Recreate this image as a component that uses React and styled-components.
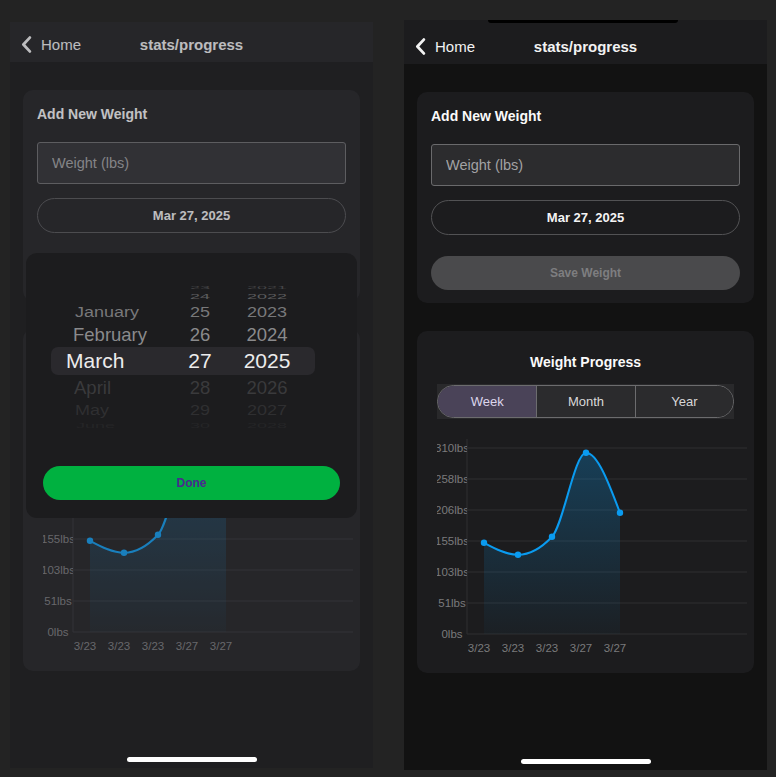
import React from 'react';
import styled, { createGlobalStyle } from 'styled-components';

const GlobalStyle = createGlobalStyle`
  html, body {
    margin: 0;
    padding: 0;
    background: #232323;
  }
  body {
    font-family: "Liberation Sans", Arial, sans-serif;
  }
  * {
    box-sizing: border-box;
  }
`;

const Page = styled.div`
  display: flex;
  align-items: flex-start;
  gap: 31px;
  width: 776px;
  height: 777px;
  padding-left: 10px;
  overflow: hidden;
`;

const Phone = styled.div`
  position: relative;
  display: flex;
  flex-direction: column;
  width: 363px;
  height: ${(p) => p.$height}px;
  margin-top: ${(p) => p.$top}px;
  background: #121212;
  overflow: hidden;
`;

const Notch = styled.div`
  position: absolute;
  top: 0;
  left: 84px;
  width: 190px;
  height: 3px;
  background: #000;
  border-radius: 0 0 4px 4px;
  z-index: 3;
`;

const Header = styled.header`
  display: grid;
  grid-template-columns: 1fr auto 1fr;
  align-items: center;
  height: ${(p) => p.$height}px;
  padding: ${(p) => p.$pad}px 11px 0;
  background: #1c1c1e;
  color: #f2f2f2;
`;

const Back = styled.div`
  display: flex;
  align-items: center;
  gap: 9px;
  font-size: 15px;
  height: 36px;
`;

const Title = styled.div`
  font-size: 15px;
  font-weight: 700;
`;

const Content = styled.main`
  display: flex;
  flex-direction: column;
  gap: 28px;
  padding: 28px 13px 0;
`;

const Card = styled.section`
  display: flex;
  flex-direction: column;
  background: #1c1c1e;
  border-radius: 10px;
  padding: ${(p) => p.$pad};
`;

const CardTitle = styled.h2`
  margin: 0;
  font-size: 14px;
  line-height: 20px;
  font-weight: 700;
  color: #fafafa;
  text-align: ${(p) => (p.$center ? 'center' : 'left')};
`;

const WeightInput = styled.input`
  height: 42px;
  margin-top: 18px;
  padding: 0 14px;
  border: 1px solid #6a6a6c;
  border-radius: 3px;
  background: #2c2c2e;
  color: #fff;
  font: 14.5px "Liberation Sans", Arial, sans-serif;
  outline: none;

  &::placeholder {
    color: #a2a2a4;
  }
`;

const DateButton = styled.button`
  height: 35px;
  margin-top: 14px;
  border: 1px solid #525254;
  border-radius: 18px;
  background: transparent;
  color: #f4f4f4;
  font: 700 13px "Liberation Sans", Arial, sans-serif;
`;

const SaveButton = styled.button`
  height: 34px;
  margin-top: 21px;
  border: none;
  border-radius: 17px;
  background: #4a4a4c;
  color: #7e7e80;
  font: 700 12px "Liberation Sans", Arial, sans-serif;
`;

const SegmentWrap = styled.div`
  align-self: center;
  width: 297px;
  height: 35px;
  margin-top: 12px;
  padding: 1px 0;
  background: #29292b;
`;

const SegmentPill = styled.div`
  display: grid;
  grid-template-columns: repeat(3, 1fr);
  height: 100%;
  border: 1px solid #6c6c6e;
  border-radius: 17px;
  overflow: hidden;
`;

const Segment = styled.div`
  display: flex;
  align-items: center;
  justify-content: center;
  background: ${(p) => (p.$active ? '#4a4358' : '#2b2b2d')};
  color: ${(p) => (p.$active ? '#ddd6ec' : '#d8d8d8')};
  font-size: 13px;
  & + & {
    border-left: 1px solid #6c6c6e;
  }
`;

const ChartBox = styled.svg`
  display: block;
  margin: 17px 0 0 20px;
  font-family: "Liberation Sans", Arial, sans-serif;
`;

const HomeIndicator = styled.div`
  position: relative;
  z-index: 3;
  align-self: center;
  width: 130px;
  height: 5px;
  margin: auto 0 6px;
  border-radius: 3px;
  background: #fff;
`;

const Dim = styled.div`
  position: absolute;
  inset: 0;
  background: rgba(64, 64, 70, 0.3);
  z-index: 1;
`;

const PickerSheet = styled.div`
  position: absolute;
  left: 16px;
  top: 231px;
  z-index: 2;
  display: flex;
  flex-direction: column;
  width: 331px;
  height: 265px;
  padding: 32px 0 18px;
  background: #1c1c1e;
  border-radius: 11px;
`;

const Wheel = styled.div`
  width: 264px;
  margin-left: 25px;
`;

const WheelRow = styled.div`
  display: grid;
  grid-template-columns: 122px 54px 80px;
  align-items: center;
  height: ${(p) => p.$h}px;
  line-height: ${(p) => p.$h}px;
  font-size: ${(p) => p.$size}px;
  color: ${(p) => p.$color};
  background: ${(p) => (p.$selected ? '#2a292d' : 'transparent')};
  border-radius: 7px;
  white-space: nowrap;
  overflow: visible;
`;

const WheelCell = styled.span`
  display: block;
  text-align: ${(p) => (p.$left ? 'left' : 'center')};
  padding-left: ${(p) => p.$indent || 0}px;
  transform: scaleY(${(p) => p.$scale});
`;

const DoneButton = styled.button`
  height: 34px;
  margin: auto 17px 0;
  border: none;
  border-radius: 17px;
  background: #00b140;
  color: #4a2a8e;
  font: 700 12px "Liberation Sans", Arial, sans-serif;
`;

const ChevronLeft = () => (
  <svg width="11" height="17" viewBox="0 0 11 17">
    <path
      d="M8.8 1.6 L2.4 8.5 L8.8 15.4"
      fill="none"
      stroke="#f2f2f2"
      strokeWidth="2.8"
      strokeLinecap="round"
      strokeLinejoin="round"
    />
  </svg>
);

const weights = [152, 132, 162, 302, 202];
const dates = ['3/23', '3/23', '3/23', '3/27', '3/27'];
const yLabels = ['310lbs', '258lbs', '206lbs', '155lbs', '103lbs', '51lbs', '0lbs'];

// monotone cubic curve through the points
function monotonePath(pts) {
  const n = pts.length;
  const s = [];
  for (let i = 0; i < n - 1; i++) {
    s.push((pts[i + 1][1] - pts[i][1]) / (pts[i + 1][0] - pts[i][0]));
  }
  const t = new Array(n).fill(0);
  for (let i = 1; i < n - 1; i++) {
    const h0 = pts[i][0] - pts[i - 1][0];
    const h1 = pts[i + 1][0] - pts[i][0];
    const p = (s[i - 1] * h1 + s[i] * h0) / (h0 + h1);
    const sign = (v) => (v < 0 ? -1 : 1);
    t[i] =
      (sign(s[i - 1]) + sign(s[i])) *
        Math.min(Math.abs(s[i - 1]), Math.abs(s[i]), 0.5 * Math.abs(p)) || 0;
  }
  t[0] = (3 * s[0] - t[1]) / 2;
  t[n - 1] = (3 * s[n - 2] - t[n - 2]) / 2;
  let d = `M${pts[0][0]},${pts[0][1]}`;
  for (let i = 0; i < n - 1; i++) {
    const [x0, y0] = pts[i];
    const [x1, y1] = pts[i + 1];
    const dx = (x1 - x0) / 3;
    d += ` C${x0 + dx},${y0 + dx * t[i]} ${x1 - dx},${y1 - dx * t[i + 1]} ${x1},${y1}`;
  }
  return d;
}

const WeightChart = ({ id }) => {
  const base = 198;
  const pts = weights.map((v, i) => [47 + 34 * i, base - (v * 186) / 310]);
  const line = monotonePath(pts);
  const area = `${line} L${pts[pts.length - 1][0]},${base} L${pts[0][0]},${base} Z`;
  return (
    <ChartBox width="310" height="220" viewBox="0 0 310 220">
      <defs>
        <linearGradient id={`fill-${id}`} x1="0" y1="17" x2="0" y2="198" gradientUnits="userSpaceOnUse">
          <stop offset="0" stopColor="#0a9bf0" stopOpacity="0.27" />
          <stop offset="1" stopColor="#0a9bf0" stopOpacity="0.03" />
        </linearGradient>
        <clipPath id={`lab-${id}`}>
          <rect x="0" y="0" width="30" height="220" />
        </clipPath>
      </defs>
      {yLabels.map((l, i) => (
        <line key={l} x1="30" x2="310" y1={12 + 31 * i} y2={12 + 31 * i} stroke="#2e2e30" strokeWidth="1" />
      ))}
      <line x1="30" x2="30" y1="3" y2="198" stroke="#2e2e30" strokeWidth="1" />
      <g clipPath={`url(#lab-${id})`}>
        {yLabels.map((l, i) => (
          <text key={l} x="15" y={12 + 31 * i} fill="#7a7a7c" fontSize="11.5" textAnchor="middle" dominantBaseline="central">
            {l}
          </text>
        ))}
      </g>
      {dates.map((d, i) => (
        <text key={i} x={42 + 34 * i} y="212" fill="#7a7a7c" fontSize="11.5" textAnchor="middle" dominantBaseline="central">
          {d}
        </text>
      ))}
      <path d={area} fill={`url(#fill-${id})`} />
      <path d={line} fill="none" stroke="#0a9bf0" strokeWidth="2" />
      {pts.map(([x, y], i) => (
        <circle key={i} cx={x} cy={y} r="3.2" fill="#0a9bf0" />
      ))}
    </ChartBox>
  );
};

const wheelRows = [
  { h: 6, size: 18, scale: 0.22, color: '#454547', cells: ['', '23', '2021'], indent: 26 },
  { h: 11, size: 18, scale: 0.45, color: '#5c5c5e', cells: ['December', '24', '2022'], indent: 25, monthColor: 'transparent' },
  { h: 20, size: 18, scale: 0.78, color: '#78787a', cells: ['January', '25', '2023'], indent: 24 },
  { h: 25, size: 18.5, scale: 0.95, color: '#8a8a8c', cells: ['February', '26', '2024'], indent: 22 },
  { h: 28, size: 21, scale: 1, color: '#ececec', cells: ['March', '27', '2025'], indent: 15, selected: true },
  { h: 25, size: 18.5, scale: 0.95, color: '#3a3a3c', cells: ['April', '28', '2026'], indent: 23 },
  { h: 20, size: 18, scale: 0.78, color: '#2f2f31', cells: ['May', '29', '2027'], indent: 24 },
  { h: 11, size: 18, scale: 0.45, color: '#252527', cells: ['June', '30', '2028'], indent: 25 },
];

const DatePicker = () => (
  <PickerSheet>
    <Wheel>
      {wheelRows.map((r, i) => (
        <WheelRow key={i} $h={r.h} $size={r.size} $color={r.color} $selected={r.selected}>
          <WheelCell $left $indent={r.indent} $scale={r.scale} style={r.monthColor ? { color: r.monthColor } : undefined}>
            {r.cells[0]}
          </WheelCell>
          <WheelCell $scale={r.scale}>{r.cells[1]}</WheelCell>
          <WheelCell $scale={r.scale}>{r.cells[2]}</WheelCell>
        </WheelRow>
      ))}
    </Wheel>
    <DoneButton>Done</DoneButton>
  </PickerSheet>
);

const ProgressScreen = ({ id, top, height, headerHeight, headerPad, picker, notch }) => (
  <Phone $top={top} $height={height}>
    {notch && <Notch />}
    <Header $height={headerHeight} $pad={headerPad}>
      <Back>
        <ChevronLeft />
        <span>Home</span>
      </Back>
      <Title>stats/progress</Title>
      <span />
    </Header>
    <Content>
      <Card $pad="14px 14px 13px">
        <CardTitle>Add New Weight</CardTitle>
        <WeightInput placeholder="Weight (lbs)" readOnly />
        <DateButton>Mar 27, 2025</DateButton>
        <SaveButton>Save Weight</SaveButton>
      </Card>
      <Card $pad="21px 0 17px">
        <CardTitle $center>Weight Progress</CardTitle>
        <SegmentWrap>
          <SegmentPill>
            <Segment $active>Week</Segment>
            <Segment>Month</Segment>
            <Segment>Year</Segment>
          </SegmentPill>
        </SegmentWrap>
        <WeightChart id={id} />
      </Card>
    </Content>
    <HomeIndicator />
    {picker && (
      <>
        <Dim />
        <DatePicker />
      </>
    )}
  </Phone>
);

export default function App() {
  return (
    <>
      <GlobalStyle />
      <Page>
        <ProgressScreen id="a" top={22} height={746} headerHeight={40} headerPad={4} picker />
        <ProgressScreen id="b" top={20} height={750} headerHeight={44} headerPad={8} notch />
      </Page>
    </>
  );
}
